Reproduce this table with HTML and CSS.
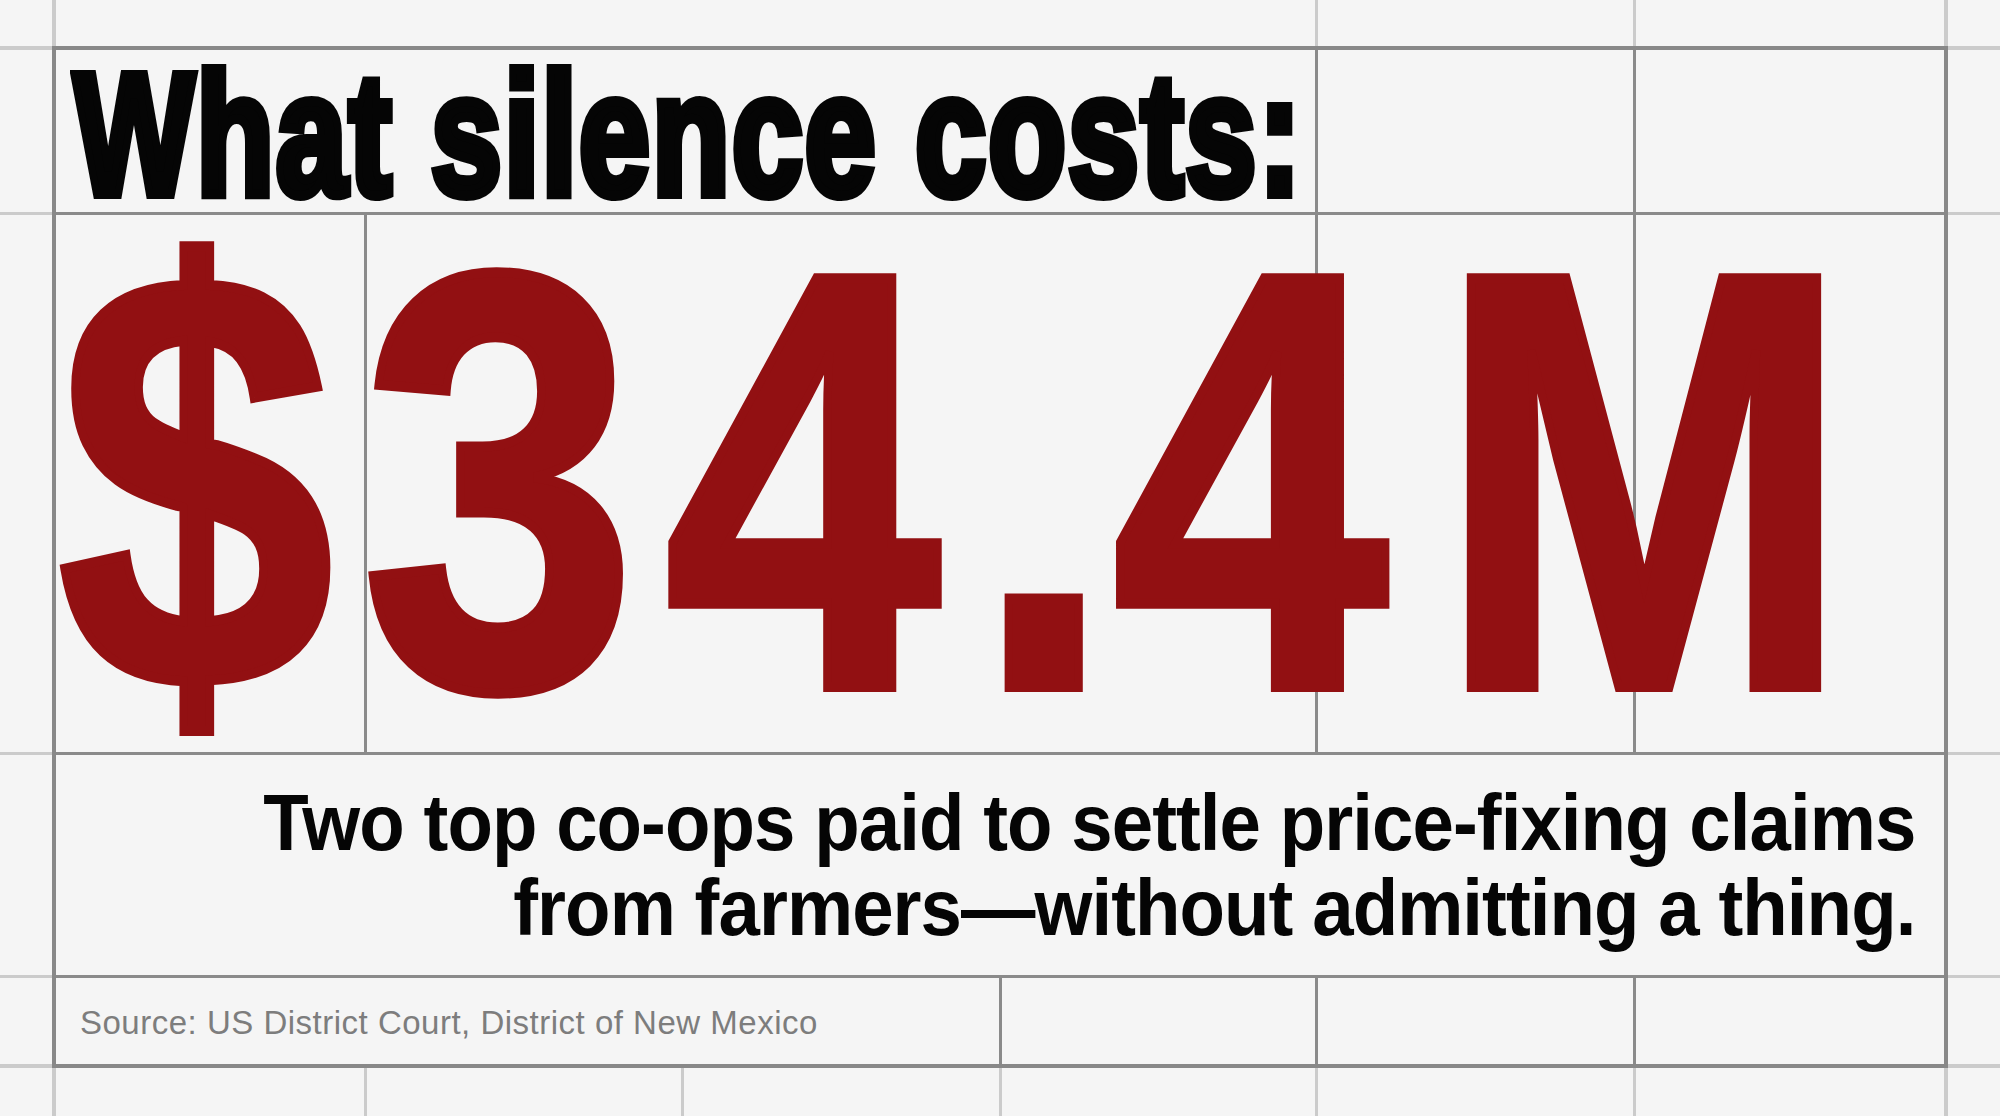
FILE: index.html
```html
<!DOCTYPE html>
<html lang="en">
<head>
<meta charset="utf-8">
<title>What silence costs</title>
<link rel="stylesheet" href="styles.css">
</head>
<body>
<main class="frame">
  <section class="row title-row">
    <div class="cell title-cell"><h1 class="title"><span class="title-text">What silence costs:</span></h1></div>
    <div class="cell"></div>
    <div class="cell"></div>
  </section>
  <section class="row big-row">
    <div class="cell c1"></div>
    <div class="cell c2"></div>
    <div class="cell c3"></div>
    <div class="cell c4"></div>
    <div class="big"><p class="big-text">$34<span class="dot">.</span>4<span class="unit">M</span></p></div>
  </section>
  <section class="row sub-row">
    <p class="sub"><span class="sub-text">Two top co-ops paid to settle price-fixing claims<br>from farmers—without admitting a thing.</span></p>
  </section>
  <section class="row foot-row">
    <div class="cell source-cell"><p class="source">Source: US District Court, District of New Mexico</p></div>
    <div class="cell"></div>
    <div class="cell"></div>
    <div class="cell"></div>
  </section>
</main>
</body>
</html>
```
FILE: styles.css
```css
html, body {
  margin: 0;
  padding: 0;
}
body {
  width: 2000px;
  height: 1116px;
  overflow: hidden;
  background-color: #f5f5f5;
  font-family: "Liberation Sans", Arial, sans-serif;
  background-image:
    linear-gradient(90deg,
      transparent 52px, #cbcbcb 52px, #cbcbcb 56px, transparent 56px,
      transparent 1315px, #cbcbcb 1315px, #cbcbcb 1318px, transparent 1318px,
      transparent 1633px, #cbcbcb 1633px, #cbcbcb 1636px, transparent 1636px,
      transparent 1944px, #cbcbcb 1944px, #cbcbcb 1948px, transparent 1948px),
    linear-gradient(90deg,
      transparent 52px, #cbcbcb 52px, #cbcbcb 56px, transparent 56px,
      transparent 364px, #cbcbcb 364px, #cbcbcb 367px, transparent 367px,
      transparent 681px, #cbcbcb 681px, #cbcbcb 684px, transparent 684px,
      transparent 999px, #cbcbcb 999px, #cbcbcb 1002px, transparent 1002px,
      transparent 1315px, #cbcbcb 1315px, #cbcbcb 1318px, transparent 1318px,
      transparent 1633px, #cbcbcb 1633px, #cbcbcb 1636px, transparent 1636px,
      transparent 1944px, #cbcbcb 1944px, #cbcbcb 1948px, transparent 1948px),
    linear-gradient(180deg,
      transparent 46px, #cbcbcb 46px, #cbcbcb 50px, transparent 50px,
      transparent 212px, #cbcbcb 212px, #cbcbcb 215px, transparent 215px,
      transparent 752px, #cbcbcb 752px, #cbcbcb 755px, transparent 755px,
      transparent 975px, #cbcbcb 975px, #cbcbcb 978px, transparent 978px,
      transparent 1064px, #cbcbcb 1064px, #cbcbcb 1068px, transparent 1068px);
  background-size: 100% 46px, 100% 48px, 100% 100%;
  background-position: 0 0, 0 1068px, 0 0;
  background-repeat: no-repeat;
}

.frame {
  box-sizing: border-box;
  margin: 46px 0 0 52px;
  width: 1896px;
  height: 1022px;
  border: 4px solid #888888;
  background: #f5f5f5;
  display: flex;
  flex-direction: column;
}

.row {
  box-sizing: border-box;
  border-bottom: 3px solid #8a8a8a;
  flex: none;
}
.row:last-child {
  border-bottom: 0;
  flex: 1;
}

.cell {
  box-sizing: border-box;
  min-width: 0;
}
.cell + .cell {
  border-left: 3px solid #8a8a8a;
}

/* Title row */
.title-row {
  height: 165px;
  display: grid;
  grid-template-columns: 1259px 318px 311px;
}
.title-cell {
  padding: 9px 0 0 18px;
}
.title {
  margin: 0;
  font-size: 173px;
  line-height: 150px;
  font-weight: 700;
  color: #050505;
  white-space: nowrap;
}
.title-text {
  display: inline-block;
  transform: scaleX(0.735);
  transform-origin: left center;
  -webkit-text-stroke: 10px #050505;
  letter-spacing: 3px;
}

/* Big figure row */
.big-row {
  height: 540px;
  display: grid;
  grid-template-columns: 308px 951px 318px 311px;
  grid-template-rows: 537px;
}
.big-row .cell { grid-row: 1; }
.big-row .c1 { grid-column: 1; }
.big-row .c2 { grid-column: 2; }
.big-row .c3 { grid-column: 3; }
.big-row .c4 { grid-column: 4; }
.big {
  grid-row: 1;
  grid-column: 1 / 5;
  min-width: 0;
  padding-left: 2px;
}
.big-text {
  width: max-content;
  margin: 0;
  font-size: 297px;
  line-height: 267px;
  font-weight: 700;
  color: #921012;
  white-space: nowrap;
  letter-spacing: 17px;
  -webkit-text-stroke: 5px #921012;
  transform: scale(1.666, 2);
  transform-origin: left top;
}
.big-text .dot {
  letter-spacing: 0;
  margin-left: 4px;
}
.big-text .unit {
  margin-left: 13px;
  letter-spacing: 0;
}

/* Subtitle row */
.sub-row {
  height: 223px;
  padding: 25px 29px 0 0;
  text-align: right;
}
.sub {
  margin: 0;
  font-size: 80px;
  line-height: 85px;
  font-weight: 700;
  color: #050505;
  white-space: nowrap;
}
.sub-text {
  display: inline-block;
  transform: scaleX(0.93);
  transform-origin: right center;
  letter-spacing: -1px;
}

/* Footer row */
.foot-row {
  display: grid;
  grid-template-columns: 943px 316px 318px 311px;
}
.source-cell {
  padding: 3px 0 0 24px;
}
.source {
  margin: 0;
  font-size: 33px;
  line-height: 83px;
  letter-spacing: 0.5px;
  color: #7d7d7d;
  white-space: nowrap;
}
```
